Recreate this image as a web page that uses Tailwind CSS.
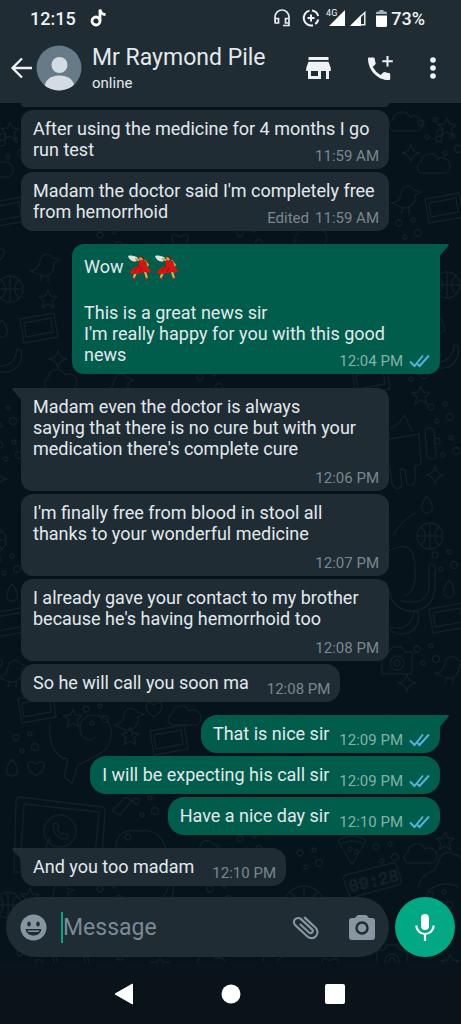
<!DOCTYPE html>
<html lang="en">
<head>
<meta charset="utf-8">
<meta name="viewport" content="width=device-width, initial-scale=1">
<title>Mr Raymond Pile</title>
<script src="https://cdn.jsdelivr.net/npm/@tailwindcss/browser@4"></script>
</head>
<body class="bg-[#0b131a] font-[Roboto,sans-serif] text-[#e3e9ec]">

<svg class="hidden" aria-hidden="true">
  <symbol id="ticks" viewBox="0 0 21 14"><path d="M1 7.500l4.500 4.500L14 1.500M8.500 10l2 2L20 1.500" fill="none" stroke="#53b4dc" stroke-width="1.900"/></symbol>
  <symbol id="dancer" viewBox="0 0 24 26">
    <path d="M8 18l-2 5M17 17l1 4 1 3" stroke="#e8b04a" stroke-width="2.200" fill="none" stroke-linecap="round"/>
    <path d="M5 24.500h3M17 24.500h3" stroke="#c81e1e" stroke-width="1.500"/>
    <path d="M0 2c3-1 8 0 10 2l-2 3.500C5 8 1 6 0 2z" fill="#dfe3dc"/>
    <path d="M8 5l5 2M17 7l3 4-3 3" stroke="#d99a4a" stroke-width="2" fill="none" stroke-linecap="round"/>
    <path d="M11 6l7 1c1 3 1 5 2 7l3 2c0 3-4 3-6 2l-5 1c-3 1-8 2-10 0 1-4 5-6 9-7z" fill="#d9140f"/>
    <path d="M12 12l-6 5M14 13l-2 5" stroke="#a30d0d" fill="none"/>
    <circle cx="13.500" cy="4" r="2.300" fill="#d99a4a"/>
    <path d="M11 3c1-3 6-2 5 2l-1 1c0-2-2-3-4-3z" fill="#5a2a18"/>
  </symbol>
  <symbol id="tail-r" viewBox="0 0 9 12"><path d="M0 0h7.500q2 .3 .8 2L0 11.500z" fill="#005c4b"/></symbol>
  <symbol id="tail-l" viewBox="0 0 9 12"><path d="M9 0H1.500Q-.5 .3 .7 2L9 11.500z" fill="#1f2c34"/></symbol>
</svg>

<div class="flex min-h-screen flex-col">
  <header class="bg-[#1f2c34]">
    <div class="flex h-9 items-center pr-9 pl-[30px] text-[18px] font-medium text-[#eef2f4]">
      <span>12:15</span>
      <svg class="ml-3.5 h-[18px] w-4" viewBox="0 0 16 18" fill="none" stroke="#fff" stroke-width="2.800"><circle cx="6" cy="12" r="4"/><path d="M10 12V.5c.7 3.500 2.500 5 5.500 5"/></svg>
      <svg class="ml-auto h-[18px] w-4" viewBox="0 0 16 18" fill="none" stroke="#e6ebee" stroke-width="1.700"><path d="M1 13V8a7 7 0 0 1 14 0v8.500H9M1.200 9.500h3.300v4.500H1.200zM11.500 9.500H15v4.500h-3.500z"/></svg>
      <svg class="ml-3 h-[18px] w-[18px]" viewBox="0 0 18 18" fill="none" stroke="#eef2f4" stroke-width="2"><path d="M10 1.600a7.500 7.500 0 0 1 6.200 5.400M16.300 10.500a7.500 7.500 0 0 1-3 4.500M11 16.200A7.500 7.500 0 1 1 7.500 1.600M9 5.500v7M5.500 9h7"/></svg>
      <span class="ml-1.5 self-start pt-2 text-[9px] leading-[10px] font-normal">4G</span>
      <svg class="-ml-2 h-4 w-4" viewBox="0 0 16 16"><path d="M16 0v16H0z" fill="#fff"/></svg>
      <svg class="ml-[5px] h-4 w-4" viewBox="0 0 16 16"><path d="M14.800 2.500v12.300H2.500z" fill="none" stroke="#e6ebee" stroke-width="1.500"/><path d="M11 5v11H0z" fill="#fff"/></svg>
      <svg class="mr-1 ml-2.5 h-[17px] w-[11px]" viewBox="0 0 11 17"><path d="M3.500 0h4v1.500h2q1.500 0 1.500 1.500V4H0V3q0-1.500 1.500-1.500h2z" fill="#aab3b8"/><path d="M0 5.500h11V15.500q0 1.500-1.500 1.500h-8Q0 17 0 15.500z" fill="#fff"/></svg>
      <span>73%</span>
    </div>
    <div class="flex h-[67px] items-center pr-[13px] pb-1 pl-2.5">
      <button class="flex items-center" aria-label="Back">
        <svg class="h-6 w-[22px]" viewBox="0 0 22 24" fill="none" stroke="#eef2f4" stroke-width="2.300"><path d="M22 12H2.500M12 2.500L2.500 12l9.500 9.500"/></svg>
        <svg class="ml-1 h-[46px] w-[46px]" viewBox="0 0 46 46"><defs><clipPath id="av"><circle cx="23" cy="23" r="22.500"/></clipPath></defs><g clip-path="url(#av)"><path d="M0 0h46v46H0z" fill="#667b87"/><circle cx="23.500" cy="20" r="8" fill="#d3dce3"/><path d="M8 46c0-11 6-15.500 15.500-15.500S39 35 39 46z" fill="#d3dce3"/></g></svg>
      </button>
      <div class="ml-2.5 min-w-0 flex-1 pt-0.5">
        <h1 class="truncate text-[23px] leading-7">Mr Raymond Pile</h1>
        <p class="text-[15px] leading-[22px]">online</p>
      </div>
      <button aria-label="Catalog"><svg class="h-[22px] w-[25px]" viewBox="0 0 25 22" fill="#eef2f4"><path d="M2.500 0h20v3h-20zM2.500 4.800h20L24.800 11v3H23v8h-3v-8h-5v8H2v-8H.2v-3zM5 14v5h7v-5z" fill-rule="evenodd"/></svg></button>
      <button class="ml-9" aria-label="Call"><svg class="h-[26px] w-[27px]" viewBox="0 0 27 26"><path d="M2 2.500h4.500q1 0 1.200 1 .2 2.500 1 4.500.2.900-.5 1.500l-2.500 2.600a20 20 0 0 0 8 8l2.500-2.600q.7-.6 1.500-.4 2.200.8 4.500 1 1 .2 1 1.200v4.800q0 1-1 1C11 25.500 1 15.500 1 3.500q0-1 1-1z" fill="#eef2f4"/><path d="M20.500 1v10.500M15.300 6.200h10.500" stroke="#eef2f4" stroke-width="2"/></svg></button>
      <button class="ml-9" aria-label="More options"><svg class="h-[22px] w-1.5" viewBox="0 0 6 22" fill="#eef2f4"><circle cx="3" cy="3" r="2.800"/><circle cx="3" cy="11" r="2.800"/><circle cx="3" cy="19" r="2.800"/></svg></button>
      <span class="w-3"></span>
    </div>
  </header>

  <main class="relative isolate flex flex-1 flex-col overflow-hidden bg-[#07131a]">
    <!-- wallpaper doodles -->
    <svg class="absolute inset-0 -z-10 h-full w-full" fill="none" stroke="#132127" stroke-width="1.300" stroke-linejoin="round" stroke-linecap="round" aria-hidden="true">
      <defs>
        <path id="star" d="M0-9l2.500 6L9-2.500 4 2l2 7-6-4-6 4 2-7-5-4.500 6.500-.5z"/>
        <path id="spark" d="M0-9q1 8 9 9-8 1-9 9-1-8-9-9 8-1 9-9z"/>
        <path id="heart" d="M0 8C-14-1-7-11 0-4 7-11 14-1 0 8z"/>
        <path id="cloud" d="M-12 8a6 6 0 0 1 0-11 9 9 0 0 1 17-3 7 7 0 0 1 8 14z"/>
        <g id="ball"><circle r="13"/><path d="M-13 0h26M0-13v26M-9-9q9 9 0 18M9-9q-9 9 0 18"/></g>
        <g id="cam"><path d="M-15-9h7l3-5H5l3 5h7v22h-30z"/><circle cy="2" r="7"/><circle cy="2" r="3"/></g>
        <path id="bird" d="M-16 8c6 0 9-4 10-10 1-7 9-9 13-3l7 2-6 3c1 8-4 14-12 13zM-4 12l-2 6M2 13v6"/>
        <g id="card"><path d="M-18-12l34-6 4 24-34 6zM-14-8l27-5 2 14-27 5z"/></g>
        <path id="drop" d="M0-9C8 1 6 8 0 8S-8 1 0-9z"/>
        <path id="banana" d="M-14 4C0 8 8 0 9-12l4 1C16 8 0 16-14 8z"/>
        <g id="dots"><circle cx="-10" cy="-6" r="3"/><circle cx="4" cy="-9" r="2"/><circle cx="9" cy="4" r="3.500"/><circle cx="-4" cy="8" r="2"/></g>
        <g id="pizza"><path d="M-14-9Q0-17 14-9L0 16zM-11-5Q0-11 11-5"/><circle cx="-2" cy="0" r="2"/><circle cx="4" cy="3" r="2"/></g>
        <g id="col">
          <use href="#cloud" x="20" y="20"/><use href="#dots" x="46" y="26"/><use href="#star" x="62" y="24"/>
          <use href="#spark" x="26" y="50"/><use href="#cloud" x="48" y="62"/><use href="#dots" x="64" y="42"/>
          <use href="#bird" x="22" y="92"/><use href="#card" x="58" y="108"/><use href="#dots" x="24" y="126"/>
          <use href="#pizza" x="20" y="158"/><use href="#heart" x="48" y="148"/><use href="#ball" x="62" y="182"/>
          <use href="#dots" x="34" y="198"/><use href="#cam" x="22" y="232"/><use href="#drop" x="54" y="222"/>
          <use href="#banana" x="60" y="254"/><use href="#dots" x="30" y="268"/><use href="#star" x="36" y="292"/>
          <path d="M4 336l30-5 2 30-6 2v14q-2 8-8 4l-2-14q-3-2-5 0l2 16q-6 6-10-2l-2-16M40 328q0-3 4-3t5 3l2 24q0 4-4 4t-5-3zM6 326l10-8 4-6 3 8 4 8"/>
          <use href="#dots" x="56" y="310"/><use href="#spark" x="50" y="372"/>
          <use href="#drop" x="42" y="402"/><use href="#dots" x="62" y="344"/><use href="#ball" x="45" y="433"/>
          <path d="M8 432q8-14 22-22M4 448q24-14 26 14t-10 30M16 498q30 6 28-20v-16q8-6 6 14 2 30-22 32-20 0-24-20"/>
          <use href="#drop" x="64" y="486"/><use href="#dots" x="60" y="458"/>
          <use href="#card" x="62" y="518"/><use href="#banana" x="20" y="520"/><use href="#cam" x="12" y="558"/>
          <use href="#dots" x="42" y="552"/><use href="#bird" x="66" y="562"/><use href="#spark" x="22" y="580"/>
        </g>
      </defs>
      <use href="#col" x="385"/><use href="#col" x="-52" y="4"/>
      <use href="#dots" x="110" y="138"/><use href="#heart" x="180" y="138"/><use href="#dots" x="250" y="136"/><use href="#cloud" x="310" y="134"/>
      <use href="#bird" x="46" y="160"/><use href="#star" x="48" y="196"/><use href="#card" x="38" y="228"/><use href="#spark" x="58" y="256"/>
      <use href="#cloud" x="60" y="278"/><use href="#bird" x="120" y="280"/><use href="#dots" x="210" y="280"/><use href="#card" x="370" y="280"/>
      <use href="#card" x="36" y="608"/><use href="#star" x="73" y="615"/><use href="#dots" x="96" y="612"/><use href="#bird" x="130" y="614"/><use href="#heart" x="154" y="606"/><use href="#cloud" x="184" y="614"/>
      <use href="#heart" x="36" y="665"/><use href="#dots" x="26" y="640"/><use href="#star" x="130" y="633"/><use href="#card" x="168" y="640"/><use href="#drop" x="12" y="665"/>
      <path d="M50 620c-2 20 5 35 18 36l-4 18 8 6 6-18 20-10c16-8 18-32 4-38s-22 2-22 12 10 14 16 8"/>
      <path d="M20 694l82 10q4 1 3 5l-4 60H14l2-70q0-5 4-5zM24 701l75 8-5 56H20z"/><circle cx="60" cy="728" r="16"/><path d="M46 744l4-10M53 721c0 10 6 16 14 15l1-4-5-2-2 2-4-6 2-2-2-4z"/>
      <path d="M116 744c0-14 10-18 24-16 14-2 24 6 26 20M112 708l14-14 6 4-12 14z"/><circle cx="128" cy="734" r="3"/><use href="#dots" x="146" y="704"/><use href="#bird" x="206" y="746"/>
      <use href="#dots" x="250" y="742"/><use href="#star" x="445" y="738"/><use href="#cloud" x="420" y="752"/>
      <use href="#dots" x="310" y="756"/><use href="#pizza" x="352" y="746"/><use href="#dots" x="386" y="750"/>
      <path d="M346 772l46-12q4-1 5 3l4 14q1 4-3 5l-44 12q-4 1-5-3l-5-14q-1-4 2-5z"/>
      <text x="350" y="789" font-size="17" font-family="Liberation Mono" transform="rotate(-13 350 789)">09:28</text>
      <circle cx="304" cy="803" r="20"/><path d="M286 803h36M304 785v20M291 790l13 13 13-13"/>
      <path d="M418 784c6-20 16-10 20-24s12-12 22-6M428 788c6-6 20-10 30-4"/><use href="#dots" x="440" y="798"/>
      <use href="#ball" x="8" y="802"/><use href="#bird" x="60" y="790"/><use href="#star" x="30" y="794"/><use href="#dots" x="110" y="792"/><use href="#banana" x="160" y="792"/><use href="#dots" x="220" y="792"/>
      <use href="#dots" x="30" y="856"/><use href="#card" x="70" y="860"/><use href="#dots" x="130" y="860"/><use href="#star" x="160" y="862"/><use href="#cloud" x="210" y="862"/><use href="#bird" x="270" y="856"/><use href="#heart" x="330" y="862"/><use href="#cam" x="392" y="856"/><use href="#star" x="450" y="860"/>
    </svg>

    <div class="flex flex-col items-start gap-[3px] px-[21px] text-[18px] leading-[21px]">
      <div class="h-1 w-[88%] max-w-[368px] rounded-b-[14px] bg-[#1f2c34]"></div>

      <div class="grid w-[88%] max-w-[368px] rounded-[12px] bg-[#1f2c34] pt-2 pr-2.5 pb-[9px] pl-3">
        <p class="col-start-1 row-start-1">After using the medicine for 4 months I go<br>run test</p>
        <span class="col-start-1 row-start-1 -mb-[5px] self-end justify-self-end text-[15px] leading-[18px] text-[#7b878e]">11:59 AM</span>
      </div>
      <div class="grid w-[88%] max-w-[368px] rounded-[12px] bg-[#1f2c34] pt-2 pr-2.5 pb-[9px] pl-3">
        <p class="col-start-1 row-start-1">Madam the doctor said I'm completely free<br>from hemorrhoid</p>
        <span class="col-start-1 row-start-1 -mb-[5px] flex gap-1.5 self-end justify-self-end text-[15px] leading-[18px] text-[#7b878e]"><span>Edited</span><span>11:59 AM</span></span>
      </div>

      <div class="relative mt-2.5 grid w-[88%] max-w-[368px] self-end rounded-[12px] rounded-tr-none bg-[#005c4b] pt-2 pr-2.5 pb-[9px] pl-3">
        <svg class="absolute top-0 -right-[9px] h-3 w-[9px]"><use href="#tail-r"/></svg>
        <div class="col-start-1 row-start-1">
          <p class="flex h-[29px] items-center">Wow <svg class="ml-1 h-[26px] w-6" role="img" aria-label="dancer"><use href="#dancer"/></svg><svg class="ml-[3px] h-[26px] w-6" role="img" aria-label="dancer"><use href="#dancer"/></svg></p>
          <p class="mt-[21px]">This is a great news sir<br>I'm really happy for you with this good<br>news</p>
        </div>
        <span class="col-start-1 row-start-1 -mb-[5px] flex items-center gap-1.5 self-end justify-self-end text-[15px] leading-[18px] text-[#84b1a8]">12:04 PM<svg class="h-3.5 w-[21px]"><use href="#ticks"/></svg></span>
      </div>

      <div class="relative mt-[11px] grid w-[88%] max-w-[368px] rounded-[12px] rounded-tl-none bg-[#1f2c34] pt-2 pr-2.5 pb-[9px] pl-3">
        <svg class="absolute top-0 -left-[9px] h-3 w-[9px]"><use href="#tail-l"/></svg>
        <p>Madam even the doctor is always<br>saying that there is no cure but with your<br>medication there's complete cure</p>
        <span class="mt-2.5 -mb-[5px] justify-self-end text-[15px] leading-[18px] text-[#7b878e]">12:06 PM</span>
      </div>
      <div class="grid w-[88%] max-w-[368px] rounded-[12px] bg-[#1f2c34] pt-2 pr-2.5 pb-[9px] pl-3">
        <p>I'm finally free from blood in stool all<br>thanks to your wonderful medicine</p>
        <span class="mt-2.5 -mb-[5px] justify-self-end text-[15px] leading-[18px] text-[#7b878e]">12:07 PM</span>
      </div>
      <div class="grid w-[88%] max-w-[368px] rounded-[12px] bg-[#1f2c34] pt-2 pr-2.5 pb-[9px] pl-3">
        <p>I already gave your contact to my brother<br>because he's having hemorrhoid too</p>
        <span class="mt-2.5 -mb-[5px] justify-self-end text-[15px] leading-[18px] text-[#7b878e]">12:08 PM</span>
      </div>
      <div class="flex items-end gap-[18px] rounded-[14px] bg-[#1f2c34] pt-2 pr-2.5 pb-[9px] pl-3">
        <p>So he will call you soon ma</p>
        <span class="-mb-[5px] text-[15px] leading-[18px] text-[#7b878e]">12:08 PM</span>
      </div>

      <div class="relative mt-2.5 flex items-end gap-2.5 self-end rounded-[16px] rounded-tr-none bg-[#005c4b] pt-2 pr-2.5 pb-[9px] pl-3">
        <svg class="absolute top-0 -right-[9px] h-3 w-[9px]"><use href="#tail-r"/></svg>
        <p>That is nice sir</p>
        <span class="-mb-[5px] flex items-center gap-1.5 text-[15px] leading-[18px] text-[#84b1a8]">12:09 PM<svg class="h-3.5 w-[21px]"><use href="#ticks"/></svg></span>
      </div>
      <div class="flex items-end gap-2.5 self-end rounded-[16px] bg-[#005c4b] pt-2 pr-2.5 pb-[9px] pl-3">
        <p>I will be expecting his call sir</p>
        <span class="-mb-[5px] flex items-center gap-1.5 text-[15px] leading-[18px] text-[#84b1a8]">12:09 PM<svg class="h-3.5 w-[21px]"><use href="#ticks"/></svg></span>
      </div>
      <div class="flex items-end gap-2.5 self-end rounded-[16px] bg-[#005c4b] pt-2 pr-2.5 pb-[9px] pl-3">
        <p>Have a nice day sir</p>
        <span class="-mb-[5px] flex items-center gap-1.5 text-[15px] leading-[18px] text-[#84b1a8]">12:10 PM<svg class="h-3.5 w-[21px]"><use href="#ticks"/></svg></span>
      </div>

      <div class="relative mt-2.5 flex items-end gap-[18px] rounded-[14px] rounded-tl-none bg-[#1f2c34] pt-2 pr-2.5 pb-[9px] pl-3">
        <svg class="absolute top-0 -left-[9px] h-3 w-[9px]"><use href="#tail-l"/></svg>
        <p>And you too madam</p>
        <span class="-mb-[5px] text-[15px] leading-[18px] text-[#7b878e]">12:10 PM</span>
      </div>
    </div>

    <form class="mt-auto flex items-center gap-1.5 px-1.5 pb-1.5">
      <div class="flex h-[60px] min-w-0 flex-1 items-center rounded-full bg-[#1f2c34] pr-3.5 pl-3.5">
        <button type="button" aria-label="Emoji"><svg class="h-[27px] w-[27px]" viewBox="0 0 27 27"><circle cx="13.500" cy="13.500" r="13" fill="#8796a1"/><ellipse cx="9" cy="10" rx="1.800" ry="2.600" fill="#1f2c34"/><ellipse cx="18" cy="10" rx="1.800" ry="2.600" fill="#1f2c34"/><path d="M5.500 15h16c-.8 4.500-4 6.500-8 6.500s-7.200-2-8-6.500z" fill="#1f2c34"/><path d="M7.500 16.500h12l-.8 1.600H8.300z" fill="#8796a1"/></svg></button>
        <span class="ml-3.5 h-[31px] w-0.5 bg-[#06a884]"></span>
        <input type="text" aria-label="Message" placeholder="Message" class="min-w-0 flex-1 bg-transparent pt-0.5 text-[23px] leading-7 outline-none placeholder:text-[#7c8a93]">
        <button type="button" aria-label="Attach"><svg class="h-[26px] w-7" viewBox="0 0 28 26" fill="none" stroke="#8796a1" stroke-width="2.200"><path transform="translate(14 13) rotate(-47)" d="M6-8V7.500a6 6 0 0 1-12 0V-9a4.200 4.200 0 0 1 8.400 0V6a2.200 2.200 0 0 1-4.400 0V-6.500"/></svg></button>
        <button type="button" class="ml-[29px]" aria-label="Camera"><svg class="h-[25px] w-[26px]" viewBox="0 0 26 25"><path d="M9.500 0h7q1 0 1.600.8L20 3h3q3 0 3 3v16q0 3-3 3H3q-3 0-3-3V6q0-3 3-3h3L7.900.8Q8.500 0 9.500 0z" fill="#8796a1"/><circle cx="13" cy="13" r="5.500" fill="none" stroke="#1f2c34" stroke-width="2.400"/></svg></button>
      </div>
      <button type="button" class="flex h-[60px] w-[60px] items-center justify-center rounded-full bg-[#00a884]" aria-label="Record"><svg class="h-[27px] w-5" viewBox="0 0 20 27"><rect x="6" y="0" width="8" height="16" rx="4" fill="#fff"/><path d="M1.300 11.500a8.700 8.500 0 0 0 17.400 0M10 20v7" fill="none" stroke="#fff" stroke-width="2.200"/></svg></button>
    </form>
  </main>

  <nav class="grid h-[61px] grid-cols-[1fr_auto_1fr] items-center bg-[#0b131a]">
    <button class="mr-[87px] justify-self-end" aria-label="Back"><svg class="h-[22px] w-5" viewBox="0 0 20 22"><path d="M18.500 1v20L1 11z" fill="#fff" stroke="#fff" stroke-linejoin="round"/></svg></button>
    <button aria-label="Home"><svg class="h-5 w-5" viewBox="0 0 20 20"><circle cx="10" cy="10" r="9.500" fill="#fff"/></svg></button>
    <button class="ml-[84px] justify-self-start" aria-label="Recent apps"><svg class="h-5 w-5" viewBox="0 0 20 20"><rect width="20" height="20" rx="2" fill="#fff"/></svg></button>
  </nav>
</div>
</body>
</html>
